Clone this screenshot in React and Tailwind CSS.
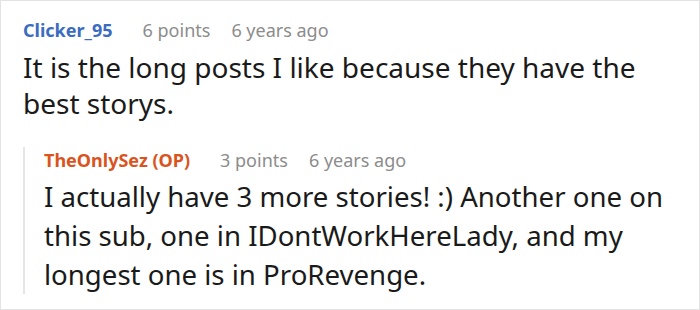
export default function App() {
  return (
    <div className="w-[700px] h-[310px] bg-white border border-[#e3e3e3] pl-[22px] pt-[16px] font-['Noto_Sans',sans-serif] overflow-hidden">
      <div className="flex items-center text-[18px] leading-[26px]">
        <span className="font-bold text-[#3b6cbf] mr-[30px]">Clicker_95</span>
        <span className="text-[#8c8c8c] mr-[21px]">6 points</span>
        <span className="text-[#8c8c8c]">6 years ago</span>
      </div>
      <p className="mt-[6px] text-[28px] leading-[36px] text-[#1a1a1a] w-[650px]">
        It is the long posts I like because they have the best storys.
      </p>
      <div className="mt-[37px] border-l-2 border-[#e6e6e6] pl-[19px]">
        <div className="-mt-[11px] flex items-center text-[18px] leading-[26px]">
          <span className="font-bold text-[#d9541e] mr-[30px]">TheOnlySez (OP)</span>
          <span className="text-[#8c8c8c] mr-[21px]">3 points</span>
          <span className="text-[#8c8c8c]">6 years ago</span>
        </div>
        <p className="mt-[4px] text-[27.6px] leading-[39px] text-[#1a1a1a] w-[650px]">
          I actually have 3 more stories! :) Another one on this sub, one in IDontWorkHereLady, and my longest one is in ProRevenge.
        </p>
      </div>
    </div>
  )
}
